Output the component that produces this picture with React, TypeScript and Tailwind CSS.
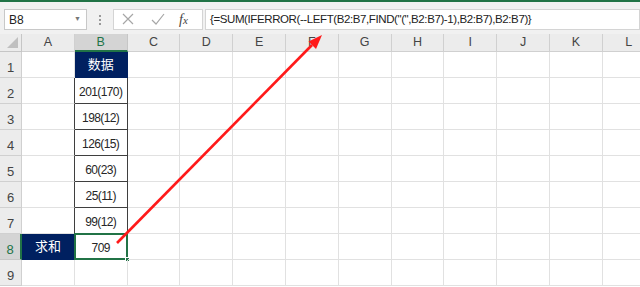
import React from "react";

const COLS = ["A", "B", "C", "D", "E", "F", "G", "H", "I", "J", "K", "L"];
const VALUES: Record<number, string> = {
  2: "201(170)",
  3: "198(12)",
  4: "126(15)",
  5: "60(23)",
  6: "25(11)",
  7: "99(12)",
};

function Cell({ row, col }: { row: number; col: number }) {
  const base = "relative flex items-end justify-center pb-[5px] border-r border-b text-[12px] leading-none tracking-[-0.6px] text-[#262626]";
  // navy header cells
  if ((row === 1 && col === 1) || (row === 8 && col === 0)) {
    return (
      <div className={`${base} bg-[#002060] border-[#002060] text-white`}>
        <span className="font-['Noto_Sans_CJK_SC',sans-serif] text-[13px] leading-none tracking-normal pb-[2px]">
          {row === 1 ? "数据" : "求和"}
        </span>
      </div>
    );
  }
  if (col === 1 && VALUES[row]) {
    return (
      <div className={`${base} border-[#3f3f3f]`}>
        <span>{VALUES[row]}</span>
      </div>
    );
  }
  if (col === 1 && row === 8) {
    return (
      <div className={`${base} border-[#e1e1e1]`}>
        <span>709</span>
        <div className="absolute -top-[1px] -left-[1px] -right-[1px] -bottom-[1px] border-2 border-[#217346]" />
        <div className="absolute -right-[3px] -bottom-[3px] h-[5px] w-[5px] bg-[#217346] border border-white" />
      </div>
    );
  }
  const darkRight = col === 0 && row >= 2 && row <= 7;
  return <div className={`${base} border-[#e1e1e1] ${darkRight ? "border-r-[#3f3f3f]" : ""}`} />;
}

export default function App() {
  const rows = [1, 2, 3, 4, 5, 6, 7, 8, 9];
  return (
    <div
      className="relative h-[287px] w-[640px] overflow-hidden bg-white"
      style={{ fontFamily: '"Liberation Sans", "Noto Sans CJK SC", sans-serif' }}
    >
      {/* title strip */}
      <div className="h-[2px] bg-[#217346]" />

      {/* formula bar */}
      <div className="flex h-[32px] items-start bg-[#f1f1f1] pt-[7px]">
        <div className="ml-[4px] flex h-[21px] w-[83px] items-center justify-between border border-[#c8c8c8] bg-white pl-[4px] pr-[5px]">
          <span className="text-[12px] text-[#222]">B8</span>
          <span className="text-[7px] text-[#777]">▼</span>
        </div>
        <div className="flex h-[21px] w-[26px] flex-col items-center justify-center gap-[2px]">
          <span className="h-[2px] w-[2px] bg-[#9a9a9a]" />
          <span className="h-[2px] w-[2px] bg-[#9a9a9a]" />
          <span className="h-[2px] w-[2px] bg-[#9a9a9a]" />
        </div>
        <div className="flex h-[21px] w-[90px] items-center border border-[#d4d4d4] bg-white">
          <svg width="30" height="21" viewBox="0 0 30 21" className="-ml-[1px]">
            <path d="M10 5l10 10M20 5L10 15" stroke="#a6a6a6" strokeWidth="1.2" fill="none" />
          </svg>
          <svg width="30" height="21" viewBox="0 0 30 21">
            <path d="M9 11l4 4 8-10" stroke="#a6a6a6" strokeWidth="1.2" fill="none" />
          </svg>
          <span className="ml-[6px] font-['Liberation_Serif',serif] text-[14px] italic text-[#444]">
            f<span className="text-[11px]">x</span>
          </span>
        </div>
        <div className="ml-[2px] flex h-[21px] flex-1 items-center border border-[#d4d4d4] bg-white pl-[4px]">
          <span className="whitespace-nowrap text-[11.5px] tracking-[-0.4px] text-[#222]">
            {'{=SUM(IFERROR(--LEFT(B2:B7,FIND("(",B2:B7)-1),B2:B7),B2:B7)}'}
          </span>
        </div>
      </div>

      {/* sheet grid */}
      <div className="grid grid-cols-[22px_repeat(12,52.8px)] grid-rows-[18px_repeat(9,26px)]">
        {/* corner */}
        <div className="relative border-r border-b border-[#c6c6c6] bg-[#ececec]">
          <div className="absolute bottom-[3px] right-[3px] h-0 w-0 border-t-[11px] border-r-[11px] border-t-transparent border-r-[#c0c0c0]" />
        </div>
        {COLS.map((c) =>
          c === "B" ? (
            <div
              key={c}
              className="flex items-end justify-center border-r border-b-2 border-r-[#c6c6c6] border-b-[#217346] bg-[#d4d4d4] text-[12.5px] leading-[15px] text-[#217346]"
            >
              {c}
            </div>
          ) : (
            <div
              key={c}
              className="flex items-end justify-center border-r border-b border-[#d0d0d0] bg-[#ececec] pb-[1px] text-[12.5px] leading-[15px] text-[#444]"
            >
              {c}
            </div>
          )
        )}
        {rows.map((r) => (
          <React.Fragment key={r}>
            {r === 8 ? (
              <div className="flex items-end justify-center border-r-2 border-b border-r-[#217346] border-b-[#c6c6c6] bg-[#d4d4d4] pb-[3px] text-[13px] leading-none text-[#217346]">
                {r}
              </div>
            ) : (
              <div className="flex items-end justify-center border-r border-b border-[#d0d0d0] bg-[#ececec] pb-[3px] text-[13px] leading-none text-[#444]">
                {r}
              </div>
            )}
            {COLS.map((c, ci) => (
              <Cell key={c} row={r} col={ci} />
            ))}
          </React.Fragment>
        ))}
      </div>

      {/* red annotation arrow */}
      <svg className="pointer-events-none absolute inset-0" width="640" height="287" viewBox="0 0 640 287">
        <line x1="117" y1="243" x2="312" y2="45" stroke="#ff1a1a" strokeWidth="2.6" />
        <polygon points="322,35 316,49 308.5,41.5" fill="#ff1a1a" />
      </svg>
    </div>
  );
}
